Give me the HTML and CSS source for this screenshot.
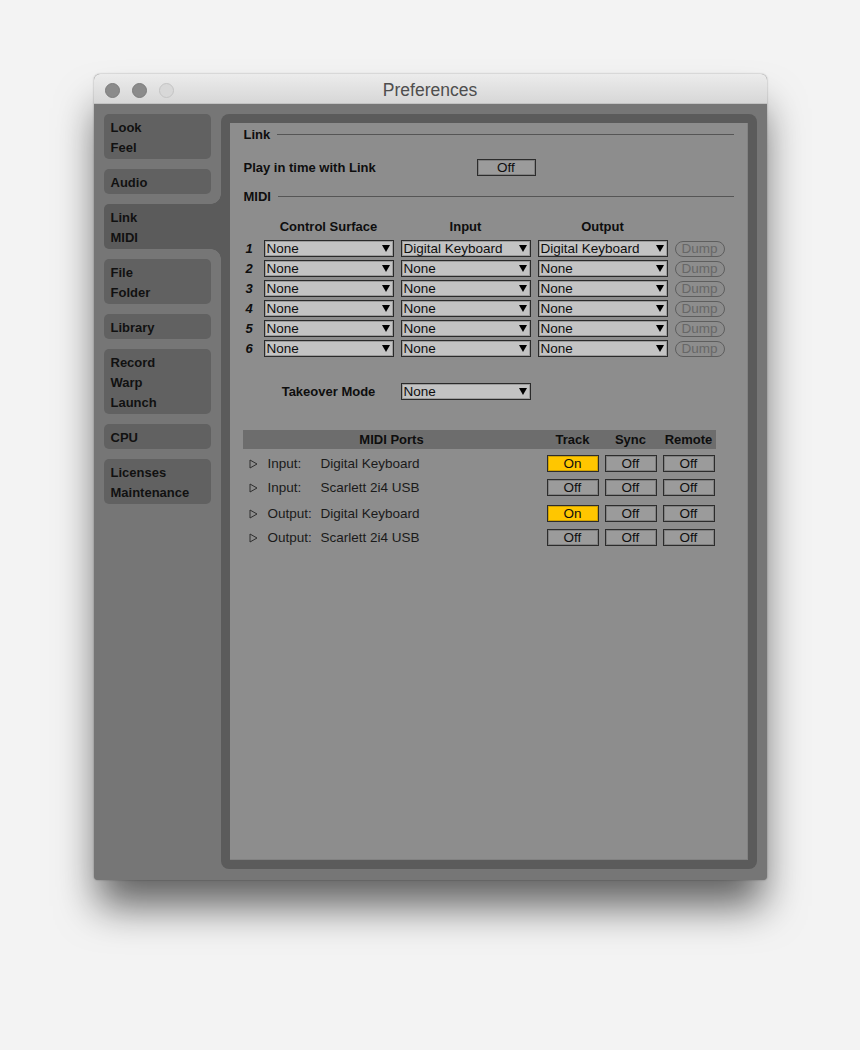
FILE: index.html
```html
<!DOCTYPE html>
<html>
  <head>
    <title>Preferences</title>
    <meta name="viewport" content="width=device-width,initial-scale=1">
    <link rel="stylesheet" href="styles.css">
  </head>
  <body>
    <div class="window">
      <div class="titlebar">
        <div class="lights">
          <span class="light"></span>
          <span class="light"></span>
          <span class="light dim"></span>
        </div>
        <div class="title">Preferences</div>
        <div></div>
      </div>

      <div class="window-body">
        <div class="tabs">
          <div class="tab"><div>Look</div><div>Feel</div></div>
          <div class="tab"><div>Audio</div></div>
          <div class="tab active"><div>Link</div><div>MIDI</div></div>
          <div class="tab"><div>File</div><div>Folder</div></div>
          <div class="tab"><div>Library</div></div>
          <div class="tab"><div>Record</div><div>Warp</div><div>Launch</div></div>
          <div class="tab"><div>CPU</div></div>
          <div class="tab"><div>Licenses</div><div>Maintenance</div></div>
        </div>

        <div class="frame">
          <div class="panel">
            <div class="section-head"><span>Link</span><div class="rule"></div></div>

            <div class="setting">
              <div class="setting-label">Play in time with Link</div>
              <div class="toggle wide">Off</div>
            </div>

            <div class="section-head midi-head"><span>MIDI</span><div class="rule"></div></div>

            <div class="midi-grid surfaces">
              <div></div>
              <div class="col-head">Control Surface</div>
              <div class="col-head">Input</div>
              <div class="col-head">Output</div>
              <div></div>

              <div class="num">1</div>
              <div class="select"><span>None</span><i></i></div>
              <div class="select"><span>Digital Keyboard</span><i></i></div>
              <div class="select"><span>Digital Keyboard</span><i></i></div>
              <div class="dump">Dump</div>

              <div class="num">2</div>
              <div class="select"><span>None</span><i></i></div>
              <div class="select"><span>None</span><i></i></div>
              <div class="select"><span>None</span><i></i></div>
              <div class="dump">Dump</div>

              <div class="num">3</div>
              <div class="select"><span>None</span><i></i></div>
              <div class="select"><span>None</span><i></i></div>
              <div class="select"><span>None</span><i></i></div>
              <div class="dump">Dump</div>

              <div class="num">4</div>
              <div class="select"><span>None</span><i></i></div>
              <div class="select"><span>None</span><i></i></div>
              <div class="select"><span>None</span><i></i></div>
              <div class="dump">Dump</div>

              <div class="num">5</div>
              <div class="select"><span>None</span><i></i></div>
              <div class="select"><span>None</span><i></i></div>
              <div class="select"><span>None</span><i></i></div>
              <div class="dump">Dump</div>

              <div class="num">6</div>
              <div class="select"><span>None</span><i></i></div>
              <div class="select"><span>None</span><i></i></div>
              <div class="select"><span>None</span><i></i></div>
              <div class="dump">Dump</div>
            </div>

            <div class="midi-grid takeover">
              <div></div>
              <div class="takeover-label">Takeover Mode</div>
              <div class="select"><span>None</span><i></i></div>
            </div>

            <div class="ports">
              <div class="ports-row ports-head">
                <div>MIDI Ports</div>
                <div>Track</div>
                <div>Sync</div>
                <div>Remote</div>
              </div>

              <div class="ports-row port">
                <div class="port-name">
                  <svg class="expand" width="9" height="10" viewBox="0 0 9 10"><polygon points="1,1 8,5 1,9" fill="none" stroke="#2e2e2e" stroke-width="1"/></svg>
                  <span class="kind">Input:</span><span>Digital Keyboard</span>
                </div>
                <div class="toggle on">On</div>
                <div class="toggle">Off</div>
                <div class="toggle">Off</div>
              </div>

              <div class="ports-row port">
                <div class="port-name">
                  <svg class="expand" width="9" height="10" viewBox="0 0 9 10"><polygon points="1,1 8,5 1,9" fill="none" stroke="#2e2e2e" stroke-width="1"/></svg>
                  <span class="kind">Input:</span><span>Scarlett 2i4 USB</span>
                </div>
                <div class="toggle">Off</div>
                <div class="toggle">Off</div>
                <div class="toggle">Off</div>
              </div>

              <div class="ports-row port out-first">
                <div class="port-name">
                  <svg class="expand" width="9" height="10" viewBox="0 0 9 10"><polygon points="1,1 8,5 1,9" fill="none" stroke="#2e2e2e" stroke-width="1"/></svg>
                  <span class="kind">Output:</span><span>Digital Keyboard</span>
                </div>
                <div class="toggle on">On</div>
                <div class="toggle">Off</div>
                <div class="toggle">Off</div>
              </div>

              <div class="ports-row port">
                <div class="port-name">
                  <svg class="expand" width="9" height="10" viewBox="0 0 9 10"><polygon points="1,1 8,5 1,9" fill="none" stroke="#2e2e2e" stroke-width="1"/></svg>
                  <span class="kind">Output:</span><span>Scarlett 2i4 USB</span>
                </div>
                <div class="toggle">Off</div>
                <div class="toggle">Off</div>
                <div class="toggle">Off</div>
              </div>
            </div>
          </div>
        </div>
      </div>
    </div>
  </body>
</html>
```

FILE: styles.css
```css
*{
  box-sizing: border-box;
  margin: 0;
  padding: 0;
}

html, body {
  min-height: 100vh;
}
body {
  background-color: #f3f3f3;
  font-family: "Liberation Sans", Arial, sans-serif;
  color: #0e0e0e;
  padding: 74px 0 120px;
}

.window {
  width: 673px;
  margin: 0 auto;
  border-radius: 6px 6px 4px 4px;
  background-color: #767676;
  box-shadow: 0 30px 40px -4px rgba(0, 0, 0, 0.6), 0 0 2px rgba(0, 0, 0, 0.35);
}

/* title bar */
.titlebar {
  height: 30px;
  display: grid;
  grid-template-columns: 1fr auto 1fr;
  align-items: center;
  padding: 4px 0 0 11px;
  border-radius: 6px 6px 0 0;
  border-bottom: 1px solid #c2c2c2;
  background: linear-gradient(#ececec, #d7d7d7);
}
.lights {
  display: flex;
  gap: 12px;
}
.light {
  width: 15px;
  height: 15px;
  border-radius: 50%;
  background-color: #8b8b8b;
  border: 1px solid #7c7c7c;
}
.light.dim {
  background-color: #d8d8d8;
  border-color: #c4c4c4;
}
.title {
  font-size: 17.5px;
  color: #4e4e4e;
  margin-right: 11px;
}

/* body */
.window-body {
  height: 776px;
  display: flex;
  gap: 10px;
  padding: 10px 10px 11px;
}

.tabs {
  width: 107px;
  display: flex;
  flex-direction: column;
  gap: 10px;
}
.tab {
  position: relative;
  padding: 4px 7px 1px;
  line-height: 20px;
  font-size: 13px;
  font-weight: bold;
  color: #111;
  background-color: #616161;
  border-radius: 5px;
}
.tab.active {
  margin-right: -10px;
  background-color: #5b5b5b;
  border-radius: 5px 0 0 5px;
}
.tab.active::before,
.tab.active::after {
  content: "";
  position: absolute;
  right: 0;
  width: 10px;
  height: 10px;
}
.tab.active::before { /* concave corner above */
  top: -10px;
  background: radial-gradient(circle at 0 0, transparent 9.5px, #5b5b5b 10px);
}
.tab.active::after { /* concave corner below */
  bottom: -10px;
  background: radial-gradient(circle at 0 100%, transparent 9.5px, #5b5b5b 10px);
}

.frame {
  flex: 1;
  display: flex;
  padding: 9px;
  background-color: #5b5b5b;
  border-radius: 8px;
}
.panel {
  flex: 1;
  padding: 4px 13px 0 14px;
  background-color: #8d8d8d;
  border: 1px solid #828282;
  border-width: 0 1px 1px 0;
}

/* sections */
.section-head {
  height: 14px;
  display: flex;
  align-items: center;
  gap: 7px;
  font-size: 13px;
  font-weight: bold;
}
.rule {
  flex: 1;
  height: 1px;
  background-color: #555;
}
.midi-head {
  margin-top: 13px;
}

.setting {
  margin-top: 17px;
  height: 18px;
  display: flex;
  align-items: center;
}
.setting-label {
  width: 233px;
  font-size: 13px;
  font-weight: bold;
}

.toggle {
  height: 17px;
  display: flex;
  align-items: center;
  justify-content: center;
  font-size: 13.5px;
  background-color: #9b9b9b;
  border: 1px solid #2c2c2c;
  box-shadow: inset 0 0 0 1px rgba(0, 0, 0, 0.18);
}
.toggle.wide {
  width: 59px;
}
.toggle.on {
  background-color: #ffc600;
}

/* midi table */
.midi-grid {
  display: grid;
  grid-template-columns: 13px 130px 130px 130px 50px;
  grid-auto-rows: 17px;
  column-gap: 7px;
  row-gap: 3px;
  margin-top: 16px;
}
.surfaces {
  grid-template-rows: 18px;
}
.col-head {
  line-height: 16px;
  text-align: center;
  font-size: 13px;
  font-weight: bold;
}
.num {
  padding-left: 2px;
  line-height: 17px;
  font-size: 13px;
  font-weight: bold;
  font-style: italic;
}
.select {
  display: flex;
  align-items: center;
  justify-content: space-between;
  padding-left: 2px;
  font-size: 13.5px;
  background-color: #c3c3c3;
  border: 1px solid #2a2a2a;
  box-shadow: inset 0 0 0 1px rgba(0, 0, 0, 0.2);
}
.select i {
  width: 0;
  height: 0;
  margin-right: 3px;
  border-left: 4px solid transparent;
  border-right: 4px solid transparent;
  border-top: 7px solid #000;
}
.dump {
  height: 16px;
  align-self: center;
  line-height: 14px;
  text-align: center;
  font-size: 13.5px;
  color: #676767;
  border: 1px solid #5e5e5e;
  border-radius: 8px;
}

.takeover {
  margin-top: 26px;
}
.takeover-label {
  line-height: 17px;
  text-align: center;
  font-size: 13px;
  font-weight: bold;
}

/* midi ports */
.ports {
  width: 473px;
  margin: 30px 0 0 -1px;
}
.ports-row {
  display: grid;
  grid-template-columns: 1fr 52px 52px 52px;
  column-gap: 6px;
  padding-right: 1px;
}
.ports-head {
  height: 19px;
  align-items: center;
  text-align: center;
  font-size: 13px;
  font-weight: bold;
  background-color: #6d6d6d;
}
.port {
  height: 17px;
  margin-top: 7px;
  font-size: 13.5px;
}
.ports-head + .port {
  margin-top: 6px;
}
.port.out-first {
  margin-top: 9px;
}
.port-name {
  display: flex;
  align-items: center;
  color: #1a1a1a;
}
.expand {
  margin: 0 10px 0 6px;
}
.kind {
  width: 53px;
}
```
